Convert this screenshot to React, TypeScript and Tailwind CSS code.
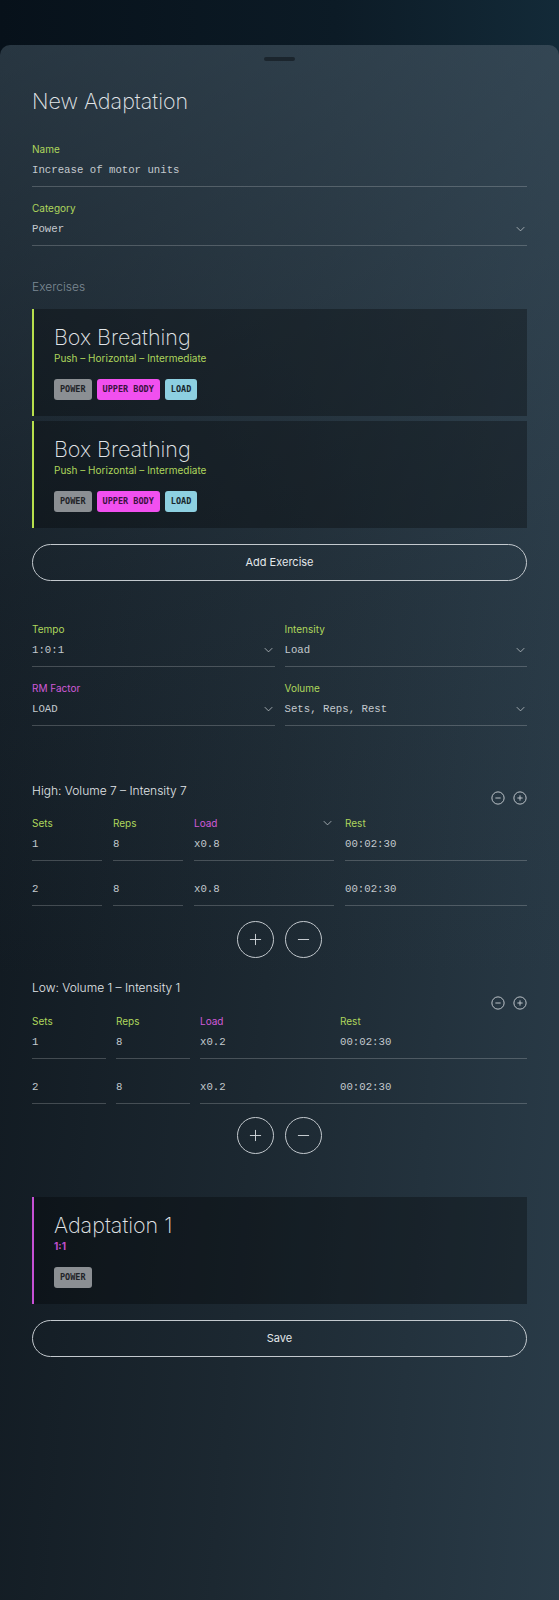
import { ReactNode } from "react";

const mono = "font-['Liberation_Mono','DejaVu_Sans_Mono',monospace]";
const tagFont = "font-['DejaVu_Sans_Mono','Liberation_Mono',monospace]";

type Tag = { label: string; tone: "gray" | "pink" | "blue" };

const tagTone = {
  gray: "bg-[#8b8f93] text-[#1f2327]",
  pink: "bg-[#f150ef] text-[#3a1140]",
  blue: "bg-[#8dd0e1] text-[#17262d]",
};

function Chevron({ className = "" }: { className?: string }) {
  return (
    <svg viewBox="0 0 12 8" className={`w-[9px] h-[6px] ${className}`} fill="none" stroke="currentColor" strokeWidth="1.1">
      <path d="M1 1.5 6 6.5 11 1.5" />
    </svg>
  );
}

function Field({ label, value, select, pink }: { label: string; value: string; select?: boolean; pink?: boolean }) {
  return (
    <div className="border-b border-white/20 pb-[8px]">
      <div className={`text-[10px] leading-[14px] ${pink ? "text-[#d05ad8]" : "text-[#aed65c]"}`}>{label}</div>
      <div className="mt-[6px] flex items-center justify-between text-[#c3c9ce]">
        <span className={`${mono} text-[10.7px] leading-[16px]`}>{value}</span>
        {select && <Chevron className="text-[#b9c0c5] mr-[2px]" />}
      </div>
    </div>
  );
}

function Card({ title, sub, tags, accent }: { title: string; sub: string; tags: Tag[]; accent: "lime" | "pink" }) {
  return (
    <div
      className={`bg-black/30 border-l-2 pl-[20px] pt-[14px] pb-[16px] ${
        accent === "lime" ? "border-[#b7df4c]" : "border-[#c650d4]"
      }`}
    >
      <div className="text-[21.5px] leading-[28px] font-extralight text-[#e2e6e9]">{title}</div>
      <div
        className={`mt-[1px] text-[10px] leading-[12px] ${
          accent === "lime" ? "text-[#aed65c]" : "text-[#c24fcd] font-bold"
        }`}
      >
        {sub}
      </div>
      <div className="mt-[15px] flex gap-[5px]">
        {tags.map((t) => (
          <span
            key={t.label}
            className={`${tagFont} h-[21px] px-[6px] flex items-center rounded-[3px] text-[8.5px] font-bold ${tagTone[t.tone]}`}
          >
            {t.label}
          </span>
        ))}
      </div>
    </div>
  );
}

function SmallRound({ plus }: { plus?: boolean }) {
  return (
    <svg viewBox="0 0 16 16" className="w-[14px] h-[14px] text-[#c3c9ce]" fill="none" stroke="currentColor" strokeWidth="1.1">
      <circle cx="8" cy="8" r="7" />
      <path d="M5 8h6" />
      {plus && <path d="M8 5v6" />}
    </svg>
  );
}

function BigRound({ plus }: { plus?: boolean }) {
  return (
    <button className="w-[37px] h-[37px] rounded-full border border-[#c3c9ce] flex items-center justify-center text-[#d3d8dc]">
      <svg viewBox="0 0 14 14" className="w-[13px] h-[13px]" fill="none" stroke="currentColor" strokeWidth="1">
        <path d="M1 7h12" />
        {plus && <path d="M7 1v12" />}
      </svg>
    </button>
  );
}

function Cell({ label, value, pink, chevron }: { label?: string; value: string; pink?: boolean; chevron?: boolean }) {
  return (
    <div className="border-b border-white/20 pb-[8px]">
      <div className="h-[14px] flex items-center justify-between">
        {label && (
          <span className={`text-[10px] leading-[14px] ${pink ? "text-[#d05ad8]" : "text-[#aed65c]"}`}>{label}</span>
        )}
        {chevron && <Chevron className="text-[#b9c0c5] mr-[2px]" />}
      </div>
      <div className={`${mono} mt-[6px] text-[10.7px] leading-[16px] text-[#c3c9ce]`}>{value}</div>
    </div>
  );
}

type Row = { sets: string; reps: string; load: string; rest: string };

function HighBlock({ rows }: { rows: Row[] }) {
  return (
    <div className="grid grid-cols-[70px_70px_140px_1fr] gap-x-[11px]">
      {rows.map((r, i) => (
        <div key={i} className="contents">
          <Cell label={i === 0 ? "Sets" : undefined} value={r.sets} />
          <Cell label={i === 0 ? "Reps" : undefined} value={r.reps} />
          <Cell label={i === 0 ? "Load" : undefined} pink chevron={i === 0} value={r.load} />
          <Cell label={i === 0 ? "Rest" : undefined} value={r.rest} />
        </div>
      ))}
    </div>
  );
}

function LowBlock({ rows }: { rows: Row[] }) {
  return (
    <div className="grid grid-cols-[74px_74px_1fr] gap-x-[10px]">
      {rows.map((r, i) => (
        <div key={i} className="contents">
          <Cell label={i === 0 ? "Sets" : undefined} value={r.sets} />
          <Cell label={i === 0 ? "Reps" : undefined} value={r.reps} />
          <div className="border-b border-white/20 pb-[8px]">
            <div className="h-[14px] flex text-[10px] leading-[14px]">
              {i === 0 && (
                <>
                  <span className="w-[140px] text-[#d05ad8]">Load</span>
                  <span className="text-[#aed65c]">Rest</span>
                </>
              )}
            </div>
            <div className={`${mono} mt-[6px] flex text-[10.7px] leading-[16px] text-[#c3c9ce]`}>
              <span className="w-[140px]">{r.load}</span>
              <span>{r.rest}</span>
            </div>
          </div>
        </div>
      ))}
    </div>
  );
}

function Section({ title, iconPad, children }: { title: string; iconPad: string; children: ReactNode }) {
  return (
    <div>
      <div className="flex items-start justify-between">
        <div className="text-[12px] leading-[18px] font-light text-[#e2e6e9]">{title}</div>
        <div className={`flex gap-[8px] ${iconPad}`}>
          <SmallRound />
          <SmallRound plus />
        </div>
      </div>
      {children}
    </div>
  );
}

function PillButton({ children }: { children: ReactNode }) {
  return (
    <button className="w-full h-[37px] rounded-full border border-[#c3c9ce] text-[11px] text-[#e3e7ea]">
      {children}
    </button>
  );
}

const exerciseTags: Tag[] = [
  { label: "POWER", tone: "gray" },
  { label: "UPPER BODY", tone: "pink" },
  { label: "LOAD", tone: "blue" },
];

export default function App() {
  const high: Row[] = [
    { sets: "1", reps: "8", load: "x0.8", rest: "00:02:30" },
    { sets: "2", reps: "8", load: "x0.8", rest: "00:02:30" },
  ];
  const low: Row[] = [
    { sets: "1", reps: "8", load: "x0.2", rest: "00:02:30" },
    { sets: "2", reps: "8", load: "x0.2", rest: "00:02:30" },
  ];

  return (
    <div className="min-h-[1600px] bg-[linear-gradient(90deg,#07111a_0%,#0c1b26_60%,#132a38_100%)] pt-[45px] font-['Inter','Noto_Sans',sans-serif]">
      <div className="min-h-[1555px] rounded-t-[10px] bg-[linear-gradient(180deg,rgba(70,92,108,0.45)_0%,rgba(70,92,108,0.12)_35%,rgba(70,92,108,0)_60%),linear-gradient(95deg,#0f171e_0%,#1c2831_50%,#2a3c49_100%)] px-[32px] pb-[40px]">
        <div className="pt-[12px] flex justify-center">
          <div className="w-[31px] h-[4px] rounded-full bg-[#1b252d]" />
        </div>

        <h1 className="mt-[26px] text-[21.5px] leading-[28px] font-extralight text-[#e2e6e9]">New Adaptation</h1>

        <div className="mt-[27px]">
          <Field label="Name" value="Increase of motor units" />
        </div>
        <div className="mt-[14px]">
          <Field label="Category" value="Power" select />
        </div>

        <div className="mt-[33px] text-[12px] leading-[16px] font-light text-[#7d8a94]">Exercises</div>

        <div className="mt-[14px] flex flex-col gap-[5px]">
          <Card title="Box Breathing" sub="Push – Horizontal – Intermediate" tags={exerciseTags} accent="lime" />
          <Card title="Box Breathing" sub="Push – Horizontal – Intermediate" tags={exerciseTags} accent="lime" />
        </div>

        <div className="mt-[16px]">
          <PillButton>Add Exercise</PillButton>
        </div>

        <div className="mt-[41px] grid grid-cols-2 gap-x-[10px] gap-y-[14px]">
          <Field label="Tempo" value="1:0:1" select />
          <Field label="Intensity" value="Load" select />
          <Field label="RM Factor" value="LOAD" select pink />
          <Field label="Volume" value="Sets, Reps, Rest" select />
        </div>

        <div className="mt-[56px]">
          <Section title="High: Volume 7 – Intensity 7" iconPad="pt-[9px]">
            <div className="mt-[11px]">
              <HighBlock rows={high} />
            </div>
          </Section>
          <div className="mt-[15px] flex justify-center gap-[11px]">
            <BigRound plus />
            <BigRound />
          </div>
        </div>

        <div className="mt-[21px]">
          <Section title="Low: Volume 1 – Intensity 1" iconPad="pt-[17px]">
            <div className="mt-[4px]">
              <LowBlock rows={low} />
            </div>
          </Section>
          <div className="mt-[13px] flex justify-center gap-[11px]">
            <BigRound plus />
            <BigRound />
          </div>
        </div>

        <div className="mt-[43px]">
          <Card title="Adaptation 1" sub="1:1" tags={[{ label: "POWER", tone: "gray" }]} accent="pink" />
        </div>

        <div className="mt-[16px]">
          <PillButton>Save</PillButton>
        </div>
      </div>
    </div>
  );
}
